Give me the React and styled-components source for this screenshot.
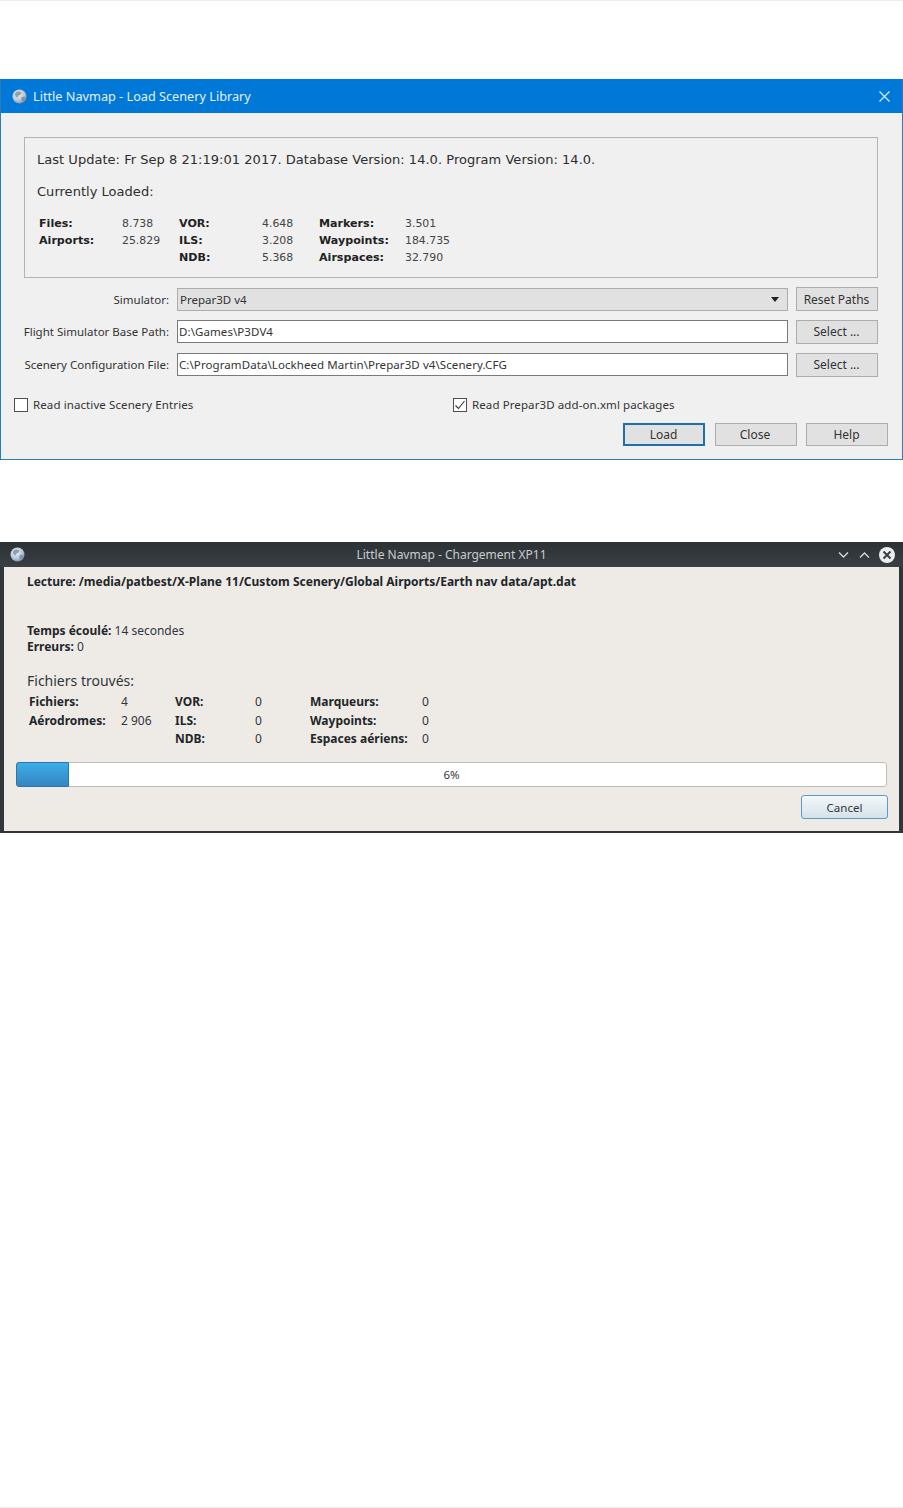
import React from 'react';
import styled, { createGlobalStyle } from 'styled-components';

const Global = createGlobalStyle`
  html, body { margin: 0; padding: 0; background: #fff; }
  * { box-sizing: border-box; }
`;

const Page = styled.div`
  height: 1508px;
  overflow: hidden;
  border-top: 1px solid #ececec;
  border-bottom: 1px solid #ececec;
  display: flex;
  flex-direction: column;
  padding-top: 78px;
`;

/* Windows style dialog */
const WinDialog = styled.section`
  height: 381px;
  display: flex;
  flex-direction: column;
  background: #f0f0f0;
  border: 1px solid #2a7db5;
  border-top: 0;
  font-family: "Noto Sans", sans-serif;
  color: #333;
`;
const WinTitle = styled.header`
  height: 34px;
  flex: none;
  background: #0078d7;
  color: #e4f1fb;
  display: flex;
  align-items: center;
  padding: 0 11px;
  gap: 6px;
  font-size: 12.7px;
`;
const WinTitleText = styled.span`
  flex: 1;
`;
const WinBody = styled.div`
  flex: 1;
  padding: 24px 13px 0 23px;
  display: flex;
  flex-direction: column;
`;
const GroupBox = styled.div`
  height: 141px;
  margin-right: 11px;
  border: 1px solid #b4b4b4;
  padding: 13px 12px 0;
`;
const InfoLine = styled.div`
  font-family: "DejaVu Sans", sans-serif;
  font-size: 13px;
  line-height: 18px;
  letter-spacing: 0.03px;
  margin-bottom: ${p => p.$gap || 0}px;
  color: #2e2e2e;
`;
const StatsGrid = styled.div`
  display: grid;
  grid-template-columns: ${p => p.$cols};
  grid-auto-rows: ${p => p.$row}px;
  align-items: center;
  padding-left: ${p => p.$pad || 0}px;
  margin-top: ${p => p.$top || 0}px;
  font-size: ${p => p.$size || 11.5}px;
`;
const WinStatLabel = styled.span`
  font-family: "DejaVu Sans", sans-serif;
  font-weight: 700;
  font-size: 11.1px;
  color: #222;
`;
const WinStatValue = styled.span`
  font-family: "DejaVu Sans", sans-serif;
  font-size: 10.9px;
  color: #444;
`;
const Form = styled.div`
  display: flex;
  flex-direction: column;
  margin-top: 9px;
  gap: 8.75px;
  margin-left: -2px;
  margin-right: 11px;
`;
const FormRow = styled.div`
  display: grid;
  grid-template-columns: 147px 1fr 82px;
  gap: 8px;
  height: 24px;
  align-items: center;
  font-size: 11.5px;
`;
const FieldLabel = styled.label`
  text-align: right;
  white-space: nowrap;
  color: #333;
`;
const ComboBox = styled.div`
  height: 23px;
  background: #e1e1e1;
  border: 1px solid #adadad;
  padding: 0 2px;
  display: flex;
  align-items: center;
  justify-content: space-between;
  color: #333;
`;
const ComboArrow = styled.span`
  width: 0;
  height: 0;
  border-left: 4.5px solid transparent;
  border-right: 4.5px solid transparent;
  border-top: 5px solid #222;
  margin-right: 6px;
`;
const TextField = styled.div`
  height: 23px;
  background: #fff;
  border: 1px solid #7a7a7a;
  padding: 0 1px;
  display: flex;
  align-items: center;
  color: #333;
  white-space: nowrap;
  letter-spacing: 0.08px;
`;
const WinButton = styled.button`
  font: inherit;
  font-size: 12px;
  color: #333;
  background: #e1e1e1;
  border: ${p => (p.$primary ? '2px solid #1f6fa8' : '1px solid #adadad')};
  height: ${p => p.$h || 24}px;
  width: ${p => p.$w || 82}px;
  padding: 0 1px 0 0;
`;
const CheckRow = styled.div`
  display: flex;
  margin-top: 20px;
  margin-left: -10px;
  height: 16px;
  align-items: center;
`;
const CheckItem = styled.label`
  display: flex;
  align-items: center;
  gap: 5px;
  font-size: 11.5px;
  width: ${p => p.$w}px;
  letter-spacing: 0.1px;
  color: #333;
`;
const CheckBox = styled.span`
  width: 14px;
  height: 14px;
  flex: none;
  border: 1px solid #4d4d4d;
  background: #fff;
  display: flex;
  align-items: center;
  justify-content: center;
`;
const WinActions = styled.div`
  display: flex;
  justify-content: flex-end;
  gap: 9.5px;
  margin-top: 10px;
  margin-right: 1px;
`;

/* KDE style dialog */
const KdeDialog = styled.section`
  margin-top: 82px;
  height: 291px;
  display: flex;
  flex-direction: column;
  background: #31363b;
  padding: 0 4px 2px;
  font-family: "Noto Sans", sans-serif;
`;
const KdeTitle = styled.header`
  height: 25px;
  flex: none;
  margin: 0 -4px;
  padding: 0 8px 0 10px;
  background: linear-gradient(#2c3136, #3a3f44);
  color: #c9cccf;
  font-size: 12px;
  display: flex;
  align-items: center;
`;
const KdeTitleText = styled.span`
  flex: 1;
  text-align: center;
  padding-left: 41px;
`;
const KdeControls = styled.div`
  display: flex;
  align-items: center;
  gap: 8px;
`;
const KdeBody = styled.div`
  flex: 1;
  background: #eeebe7;
  color: #31363b;
  padding: 7px 12px 0 12px;
  display: flex;
  flex-direction: column;
`;
const KdeLine = styled.div`
  font-size: 12px;
  line-height: 16.5px;
  padding-left: 11px;
  margin-top: ${p => p.$top || 0}px;
  color: ${p => p.$color || '#31363b'};
`;
const B = styled.b`
  font-weight: 700;
  color: #232629;
`;
const KdeHeading = styled.div`
  font-size: 14px;
  line-height: 18px;
  margin-top: 16px;
  padding-left: 11px;
  color: #31363b;
`;
const Progress = styled.div`
  position: relative;
  height: 25px;
  margin-top: 14px;
  background: #fff;
  border: 1px solid #bcbcb8;
  border-radius: 3px;
  display: flex;
  align-items: center;
  justify-content: center;
  font-size: 11.5px;
  color: #31363b;
`;
const ProgressFill = styled.div`
  position: absolute;
  left: -1px;
  top: -1px;
  bottom: -1px;
  background: linear-gradient(#3daee9, #3584c0);
  border: 1px solid #2a76ad;
  border-radius: 3px 0 0 3px;
`;
const KdeActions = styled.div`
  display: flex;
  justify-content: flex-end;
  margin-top: 8px;
  margin-right: -1px;
`;
const KdeButton = styled.button`
  font: inherit;
  font-size: 11.5px;
  width: 87px;
  height: 24px;
  color: #31363b;
  border: 1px solid #5a9cc5;
  border-radius: 3px;
  background: linear-gradient(#f4f7f8, #d4e2ea);
  padding: 0;
`;

const Globe = ({ size, id }) => (
  <svg width={size} height={size} viewBox="0 0 16 16" style={{ flex: 'none' }}>
    <defs>
      <radialGradient id={id} cx="0.4" cy="0.35" r="0.75">
        <stop offset="0" stopColor="#f0f4f8" />
        <stop offset="0.6" stopColor="#b5c6d8" />
        <stop offset="1" stopColor="#5f7f9f" />
      </radialGradient>
    </defs>
    <circle cx="8" cy="8" r="7.5" fill={`url(#${id})`} />
    <path d="M5 3c2-1 4 0 5 1l-1 2-2 1-1 2-2-1-1-3zM10 9l3-1 1 2-2 3-2-1z" fill="#6f7f8c" opacity="0.7" />
  </svg>
);

const winCols = '83px 57px 83px 57px 86px auto';
const winStats = [
  ['Files:', '8.738', 'VOR:', '4.648', 'Markers:', '3.501'],
  ['Airports:', '25.829', 'ILS:', '3.208', 'Waypoints:', '184.735'],
  ['', '', 'NDB:', '5.368', 'Airspaces:', '32.790'],
];
const kdeCols = '92px 54px 80px 55px 112px auto';
const kdeStats = [
  ['Fichiers:', '4', 'VOR:', '0', 'Marqueurs:', '0'],
  ['Aérodromes:', '2 906', 'ILS:', '0', 'Waypoints:', '0'],
  ['', '', 'NDB:', '0', 'Espaces aériens:', '0'],
];
const progressWidth = 6.1;

export default function App() {
  return (
    <Page>
      <Global />
      <WinDialog>
        <WinTitle>
          <Globe size={15} id="g1" />
          <WinTitleText>Little Navmap - Load Scenery Library</WinTitleText>
          <svg width="11" height="11" viewBox="0 0 11 11" style={{ marginRight: 1 }}>
            <path d="M.5.5l10 10M10.5.5l-10 10" stroke="#d8ecfa" strokeWidth="1.2" />
          </svg>
        </WinTitle>
        <WinBody>
          <GroupBox>
            <InfoLine $gap={14}>Last Update: Fr Sep 8 21:19:01 2017. Database Version: 14.0. Program Version: 14.0.</InfoLine>
            <InfoLine $gap={14}>Currently Loaded:</InfoLine>
            <StatsGrid $cols={winCols} $row={17} $pad={2}>
              {winStats.flat().map((t, i) =>
                i % 2 === 0 ? <WinStatLabel key={i}>{t}</WinStatLabel> : <WinStatValue key={i}>{t}</WinStatValue>
              )}
            </StatsGrid>
          </GroupBox>
          <Form>
            <FormRow>
              <FieldLabel>Simulator:</FieldLabel>
              <ComboBox>Prepar3D v4<ComboArrow /></ComboBox>
              <WinButton>Reset Paths</WinButton>
            </FormRow>
            <FormRow>
              <FieldLabel>Flight Simulator Base Path:</FieldLabel>
              <TextField>D:\Games\P3DV4</TextField>
              <WinButton>Select ...</WinButton>
            </FormRow>
            <FormRow>
              <FieldLabel>Scenery Configuration File:</FieldLabel>
              <TextField>C:\ProgramData\Lockheed Martin\Prepar3D v4\Scenery.CFG</TextField>
              <WinButton>Select ...</WinButton>
            </FormRow>
          </Form>
          <CheckRow>
            <CheckItem $w={439}><CheckBox />Read inactive Scenery Entries</CheckItem>
            <CheckItem>
              <CheckBox>
                <svg width="12" height="12" viewBox="0 0 12 12">
                  <path d="M1.5 6.5l3 3 6-7.5" fill="none" stroke="#333" strokeWidth="1.1" />
                </svg>
              </CheckBox>
              Read Prepar3D add-on.xml packages
            </CheckItem>
          </CheckRow>
          <WinActions>
            <WinButton $primary $w={82} $h={23}>Load</WinButton>
            <WinButton $w={82} $h={23}>Close</WinButton>
            <WinButton $w={82} $h={23}>Help</WinButton>
          </WinActions>
        </WinBody>
      </WinDialog>

      <KdeDialog>
        <KdeTitle>
          <Globe size={15} id="g2" />
          <KdeTitleText>Little Navmap - Chargement XP11</KdeTitleText>
          <KdeControls>
            <svg width="13" height="8" viewBox="0 0 12 8"><path d="M1.5 1.5l4.5 4.5 4.5-4.5" fill="none" stroke="#d8dadc" strokeWidth="1.3" /></svg>
            <svg width="13" height="8" viewBox="0 0 12 8"><path d="M1.5 6.5l4.5-4.5 4.5 4.5" fill="none" stroke="#d8dadc" strokeWidth="1.3" /></svg>
            <svg width="16" height="16" viewBox="0 0 16 16">
              <circle cx="8" cy="8" r="8" fill="#eceded" />
              <path d="M4.5 4.5l7 7M11.5 4.5l-7 7" stroke="#3a3f44" strokeWidth="2" />
            </svg>
          </KdeControls>
        </KdeTitle>
        <KdeBody>
          <KdeLine><B>Lecture: /media/patbest/X-Plane 11/Custom Scenery/Global Airports/Earth nav data/apt.dat</B></KdeLine>
          <KdeLine $top={32}><B>Temps écoulé:</B> 14 secondes</KdeLine>
          <KdeLine><B>Erreurs:</B> 0</KdeLine>
          <KdeHeading>Fichiers trouvés:</KdeHeading>
          <StatsGrid $cols={kdeCols} $row={18.5} $pad={13} $size={12} $top={3}>
            {kdeStats.flat().map((t, i) => (i % 2 === 0 ? <B key={i}>{t}</B> : <span key={i}>{t}</span>))}
          </StatsGrid>
          <Progress>
            <ProgressFill style={{ width: `${progressWidth}%` }} />
            6%
          </Progress>
          <KdeActions>
            <KdeButton>Cancel</KdeButton>
          </KdeActions>
        </KdeBody>
      </KdeDialog>
    </Page>
  );
}
